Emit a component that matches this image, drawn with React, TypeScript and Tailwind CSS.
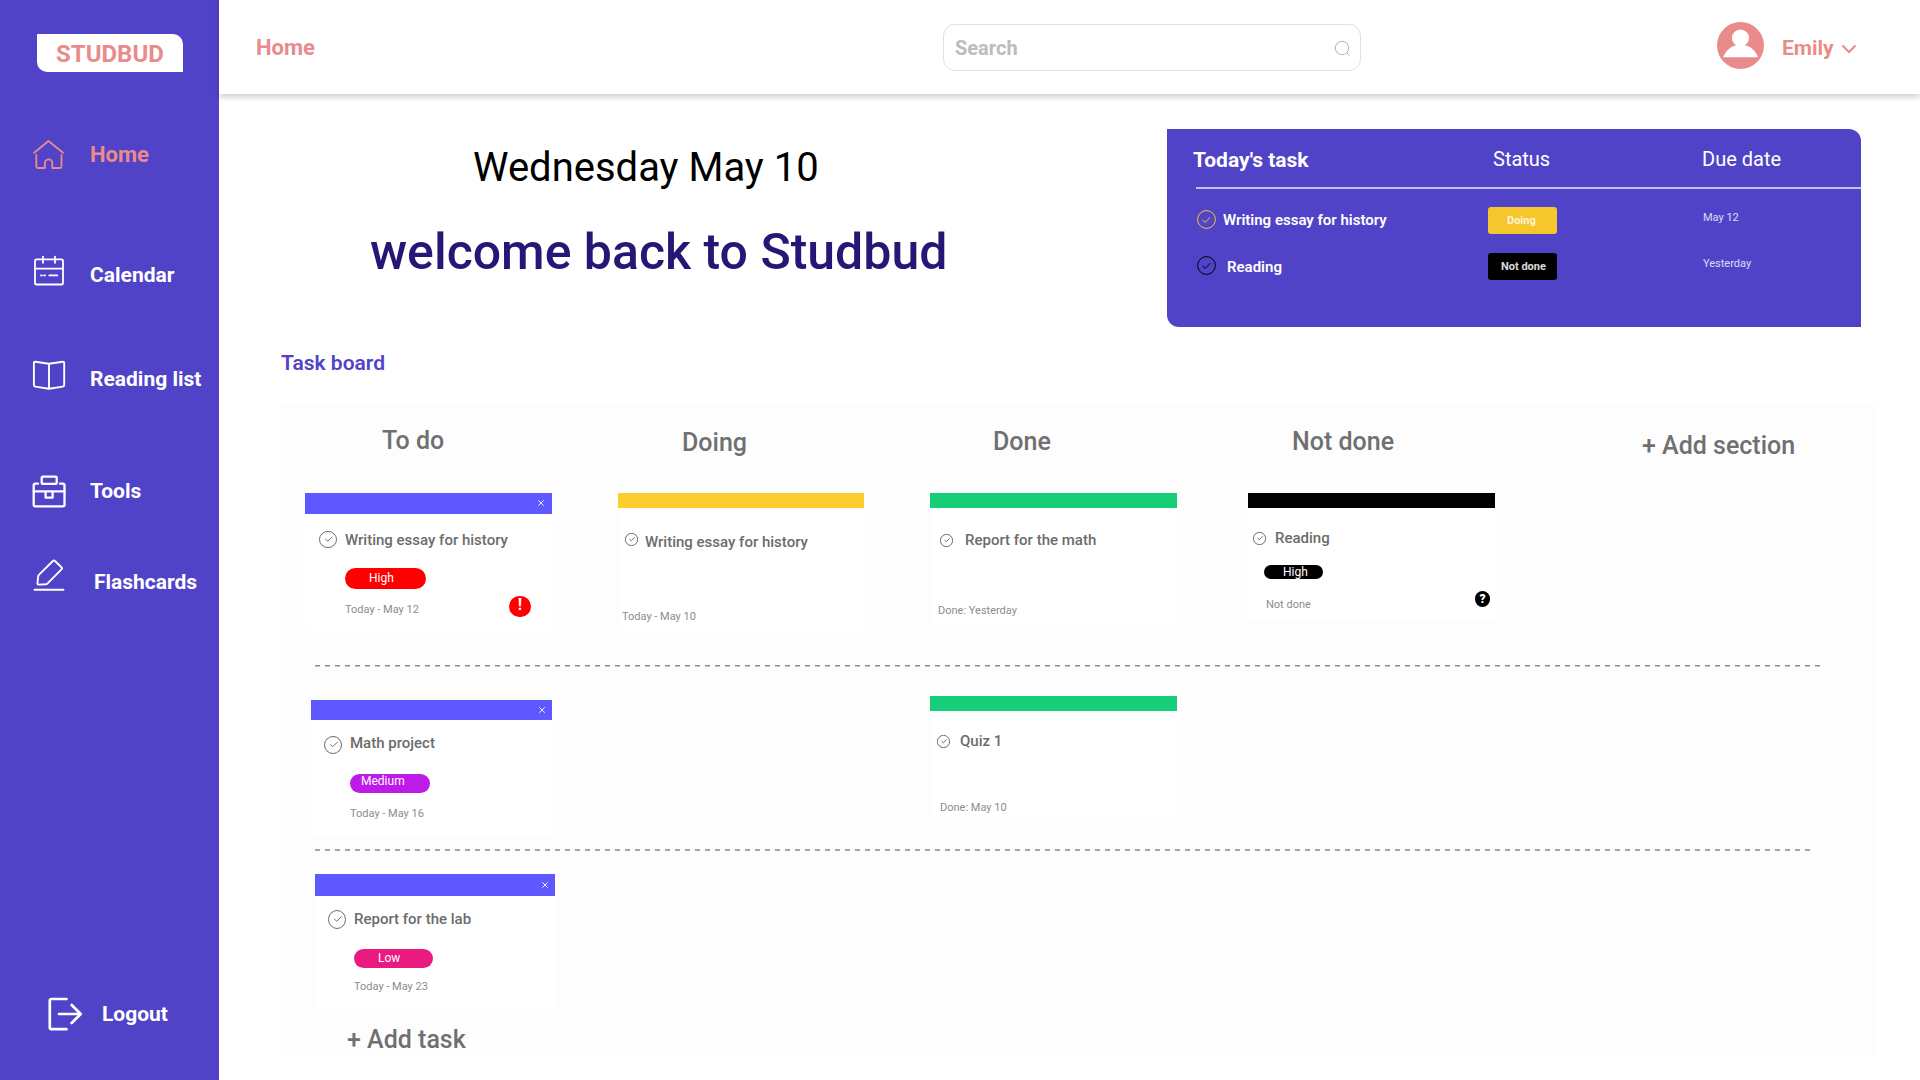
import type { ReactNode } from 'react';

function NavIcon({ children, className }: { children: ReactNode; className: string }) {
  return (
    <svg
      viewBox="0 0 36 36"
      fill="none"
      stroke="currentColor"
      strokeLinecap="round"
      strokeLinejoin="round"
      className={`h-9 w-9 shrink-0 ${className}`}
    >
      {children}
    </svg>
  );
}

function HomeIcon() {
  return (
    <NavIcon className="stroke-[1.8]">
      <path d="M2.2 14.7 16.5 3 31 14.7" />
      <path d="M4.3 17v11.5Q4.3 30 5.8 30h7.1v-4.9a3.7 3.7 0 0 1 7.4 0V30h7.7q1.5 0 1.5-1.5V17" />
    </NavIcon>
  );
}

function CalendarIcon() {
  return (
    <NavIcon className="stroke-[1.8]">
      <rect x="3" y="5.3" width="28" height="25.2" rx="1.6" />
      <path d="M3 14.7h28M11 2.6v6.2M23 2.6v6.2M9 21.4h.8M12 21.4h1M17.3 21.4h8" />
    </NavIcon>
  );
}

function BookIcon() {
  return (
    <NavIcon className="stroke-[1.9]">
      <path d="M17 4.7 3.2 2.8Q1.9 2.7 1.9 4v22q0 1.4 1.3 1.6L17 29.8l13.8-2.2q1.4-.2 1.4-1.6V4q0-1.3-1.4-1.2ZM17 4.7v25.1" />
    </NavIcon>
  );
}

function ToolsIcon() {
  return (
    <NavIcon className="stroke-[2.3]">
      <path d="M6 9.7H3.2q-1.5 0-1.5 1.5v19.6q0 1.6 1.6 1.6h27.6q1.6 0 1.6-1.6V11.2q0-1.5-1.5-1.5H28" />
      <rect x="9.7" y="2.7" width="15" height="7.2" rx="1" />
      <path d="M1.7 17.3h30.8M13.6 17.3v6.4h7v-6.4" />
    </NavIcon>
  );
}

function PencilIcon() {
  return (
    <NavIcon className="stroke-[1.9]">
      <path d="M20.9 3q1.1-1 2.1 0l6.7 6.5q.8.8 0 1.7L15.6 25.3q-.9.9-2.1 1l-6.6.3q-1.5 0-1.4-1.4l.6-6.3q.1-1.3 1-2.2Z" />
      <path d="M2.5 31.7h29" />
    </NavIcon>
  );
}

function LogoutIcon() {
  return (
    <NavIcon className="stroke-[2.7]">
      <path d="M18.5 3H3.4Q1.8 3 1.8 4.6v27q0 1.600 1.600 1.600h15.100M11 18h21.500M23.700 9l9 9-9 9" />
    </NavIcon>
  );
}

function NavItem({ icon, label, className, labelClass }: { icon: ReactNode; label: string; className: string; labelClass: string }) {
  return (
    <a className={`flex h-9 items-start font-bold leading-6 ${className}`}>
      {icon}
      <span className={labelClass}>{label}</span>
    </a>
  );
}

function Sidebar() {
  return (
    <aside className="flex h-full w-[219px] shrink-0 flex-col bg-[#5143c7] text-white">
      <div className="mt-[34px] ml-[37px] flex h-[38px] w-[146px] shrink-0 rounded-tr-[10px] rounded-bl-[10px] bg-white pt-1.5 pl-[19px] text-2xl leading-7 font-bold text-[#ea8b8b]">
        STUDBUD
      </div>
      <nav className="flex flex-col pl-8">
        <NavItem icon={<HomeIcon />} label="Home" className="mt-[66px] text-[#ea8b8b]" labelClass="mt-[5px] ml-[22px] text-[22px]" />
        <NavItem icon={<CalendarIcon />} label="Calendar" className="mt-20" labelClass="mt-[9px] ml-[22px] text-[21px]" />
        <NavItem icon={<BookIcon />} label="Reading list" className="mt-[69px]" labelClass="mt-2 ml-[22px] text-[21px]" />
        <NavItem icon={<ToolsIcon />} label="Tools" className="mt-[79px]" labelClass="mt-[5px] ml-[22px] text-[21px]" />
        <NavItem icon={<PencilIcon />} label="Flashcards" className="mt-12" labelClass="mt-3 ml-[26px] text-[21px]" />
      </nav>
      <NavItem icon={<LogoutIcon />} label="Logout" className="mt-auto mb-12 ml-12" labelClass="mt-1.5 ml-[18px] text-[21px]" />
    </aside>
  );
}

function Header() {
  return (
    <header className="flex h-[94px] shrink-0 items-start bg-white font-bold text-[#ea8b8b] shadow-[0_3px_6px_rgba(0,0,0,0.2)]">
      <h1 className="mt-9 ml-[37px] w-[687px] text-[22px] leading-6">Home</h1>
      <div className="mt-6 flex h-[47px] w-[418px] shrink-0 items-start justify-between rounded-xl border border-[#e0e0e0] pr-[9px] pl-[11px] text-xl leading-6 text-[#bcbcbc]">
        <span className="mt-[11px]">Search</span>
        <svg viewBox="0 0 18 18" fill="none" stroke="#b4b4b4" className="mt-[14px] h-[18px] w-[18px] stroke-1">
          <circle cx="9" cy="9" r="6.7" />
          <path d="m13.7 13.7 2.8 2.8" />
        </svg>
      </div>
      <svg viewBox="0 0 47 47" className="mt-[22px] ml-[356px] h-[47px] w-[47px] shrink-0">
        <circle cx="23.5" cy="23.5" r="23.5" fill="#ea8b8b" />
        <circle cx="23.5" cy="16" r="8.6" fill="#fff" />
        <path d="M6 35.300C9 28.500 14 24.300 18.500 23.500h10C33.500 24.300 38.500 28.500 41 35.300Z" fill="#fff" />
      </svg>
      <span className="mt-9 ml-[18px] text-[21px] leading-6">Emily</span>
      <svg viewBox="0 0 16 10" fill="none" stroke="currentColor" className="mt-11 ml-[7px] h-2.5 w-4 stroke-2">
        <path d="M1.500 1.500 8 8l6.500-6.500" />
      </svg>
    </header>
  );
}

function PanelCheck({ className }: { className: string }) {
  return (
    <svg viewBox="0 0 19 19" fill="none" stroke="currentColor" className={`ml-[30px] h-[19px] w-[19px] shrink-0 ${className}`}>
      <circle cx="9.5" cy="9.5" r="8.9" />
      <path d="m5.500 9.800 2.700 2.700 5-5.300" />
    </svg>
  );
}

function TodayPanel() {
  return (
    <section className="mt-[35px] h-[198px] w-[694px] shrink-0 rounded-tr-xl rounded-bl-xl bg-[#5143c7] text-white">
      <div className="grid h-[58px] grid-cols-[326px_209px_1fr] items-start text-xl leading-6">
        <h2 className="mt-[19px] ml-[26px] text-[21px] font-bold">Today's task</h2>
        <span className="mt-[18px]">Status</span>
        <span className="mt-[18px]">Due date</span>
      </div>
      <div className="mb-[18px] ml-[29px] h-[2px] bg-[#c4bfec]" />
      <div className="grid h-[46px] grid-cols-[321px_214px_1fr] items-start text-[11px]">
        <div className="flex items-start text-[15px] leading-[18px] font-semibold">
          <PanelCheck className="mt-[3px] text-[#f6c72d]" />
          <span className="mt-1 ml-[7px]">Writing essay for history</span>
        </div>
        <span className="h-[27px] w-[69px] rounded-[3px] bg-[#f6c72d] pt-1.5 pl-[19px] leading-4 font-bold text-white/80">Doing</span>
        <span className="mt-1 ml-px leading-[14px] text-white/80">May 12</span>
      </div>
      <div className="grid h-[46px] grid-cols-[321px_214px_1fr] items-start text-[11px]">
        <div className="flex items-start text-[15px] leading-[18px] font-semibold">
          <PanelCheck className="mt-[3px] text-black" />
          <span className="mt-[5px] ml-[11px]">Reading</span>
        </div>
        <span className="h-[27px] w-[69px] rounded-[3px] bg-black pt-1.5 pl-[13px] leading-4 font-bold text-white/85">Not done</span>
        <span className="mt-1 ml-px leading-[14px] text-white/80">Yesterday</span>
      </div>
    </section>
  );
}

interface CardProps {
  size: string;
  bar: string;
  closable?: boolean;
  title: string;
  titleRow: string;
  check: string;
  label?: string;
  labelClass?: string;
  note: string;
  noteClass: string;
  badge?: ReactNode;
}

function Card({ size, bar, closable, title, titleRow, check, label, labelClass, note, noteClass, badge }: CardProps) {
  return (
    <article className={`relative shrink-0 bg-white ${size}`}>
      <div className={`flex items-center justify-end ${bar}`}>
        {closable && (
          <svg viewBox="0 0 6 6" stroke="#fff" className="h-[6px] w-[6px] stroke-[0.9]">
            <path d="M.3.3 5.7 5.7M5.7.3.3 5.7" />
          </svg>
        )}
      </div>
      <div className={`flex h-[18px] items-start text-[15px] leading-[18px] font-medium text-[#6c6c6c] ${titleRow}`}>
        <svg viewBox="0 0 18 18" fill="none" stroke="currentColor" preserveAspectRatio="none" className={`shrink-0 ${check}`}>
          <circle cx="9" cy="9" r="8.5" vectorEffect="non-scaling-stroke" />
          <path d="m6.3 8.5 2.5 2.2 4.6-4.6" vectorEffect="non-scaling-stroke" />
        </svg>
        <h4>{title}</h4>
      </div>
      {label && <div className={`rounded-full text-xs text-white ${labelClass}`}>{label}</div>}
      <p className={`text-[11px] leading-[14px] text-[#8c8c8c] ${noteClass}`}>{note}</p>
      {badge}
    </article>
  );
}

function Divider({ className, y }: { className: string; y: number }) {
  return (
    <svg className={`ml-[34px] h-[2px] shrink-0 ${className}`} stroke="#8a8a8a" strokeWidth="1.5" strokeDasharray="5 5">
      <line x1="0" x2="100%" y1={y} y2={y} />
    </svg>
  );
}

function Board() {
  return (
    <section className="mt-[29px] ml-[62px] flex h-[653px] w-[1596px] shrink-0 flex-col bg-[#fdfdfd]">
      <div className="grid h-[89px] shrink-0 grid-cols-[313px_312px_318px_393px_1fr] items-start pl-6 text-[25px] leading-[25px] font-medium text-[#707070]">
        <h3 className="mt-6 ml-[77px]">To do</h3>
        <h3 className="mt-[26px] ml-16">Doing</h3>
        <h3 className="mt-[25px] ml-[63px]">Done</h3>
        <h3 className="mt-[25px] ml-11">Not done</h3>
        <button className="mt-[29px] ml-px text-left">+ Add section</button>
      </div>
      <div className="grid h-[172px] shrink-0 grid-cols-[313px_312px_318px_393px_1fr] items-start pl-6">
        <Card
          size="h-[138px] w-[247px]"
          bar="h-[21px] bg-[#5f57ff] pr-2 pb-px"
          closable
          title="Writing essay for history"
          titleRow="mt-[17px] ml-[14px] gap-2"
          check="h-[17px] w-[18px]"
          label="High"
          labelClass="mt-[19px] ml-10 h-[21px] w-[81px] bg-[#ff0000] pl-6 pt-px leading-[18px]"
          note="Today - May 12"
          noteClass="mt-[14px] ml-10"
          badge={
            <span className="absolute top-[103px] left-[204px] h-[21px] w-[22px] rounded-full bg-[#ff0000] text-center text-base leading-[18px] font-bold text-white">
              !
            </span>
          }
        />
        <Card
          size="h-[138px] w-[246px]"
          bar="h-[15px] bg-[#fbce2b]"
          title="Writing essay for history"
          titleRow="mt-[25px] ml-[7px] gap-[7px]"
          check="h-[13px] w-[13px]"
          note="Today - May 10"
          noteClass="mt-[59px] ml-1"
        />
        <Card
          size="h-[132px] w-[247px]"
          bar="h-[15px] bg-[#16ce77]"
          title="Report for the math"
          titleRow="mt-[23px] ml-[10px] gap-3"
          check="mt-[3px] h-[13px] w-[13px]"
          note="Done: Yesterday"
          noteClass="mt-[55px] ml-2"
        />
        <Card
          size="h-[126px] w-[247px]"
          bar="h-[15px] bg-black"
          title="Reading"
          titleRow="mt-[21px] ml-[5px] gap-[9px]"
          check="mt-[3px] h-[13px] w-[13px]"
          label="High"
          labelClass="mt-[18px] ml-4 h-[14px] w-[59px] bg-black pl-[19px] leading-[14px]"
          note="Not done"
          noteClass="mt-[19px] ml-[18px]"
          badge={
            <span className="absolute top-[98px] left-[227px] h-4 w-[15px] rounded-full bg-black text-center text-xs leading-4 font-black text-white">
              ?
            </span>
          }
        />
      </div>
      <Divider className="w-[1505px]" y={0.75} />
      <div className="grid h-[182px] shrink-0 grid-cols-[619px_1fr] items-start pl-[30px]">
        <Card
          size="mt-[33px] h-[136px] w-[241px]"
          bar="h-5 bg-[#5f57ff] pr-[7px]"
          closable
          title="Math project"
          titleRow="mt-[14px] ml-[13px] gap-2"
          check="mt-[2px] h-[18px] w-[18px]"
          label="Medium"
          labelClass="mt-[22px] ml-[39px] h-[19px] w-[80px] bg-[#be1ae8] pl-[11px] leading-[14px]"
          note="Today - May 16"
          noteClass="mt-[14px] ml-[39px]"
        />
        <Card
          size="mt-[29px] h-[126px] w-[247px]"
          bar="h-[15px] bg-[#16ce77]"
          title="Quiz 1"
          titleRow="mt-[21px] ml-[7px] gap-[10px]"
          check="mt-[3px] h-[13px] w-[13px]"
          note="Done: May 10"
          noteClass="mt-[51px] ml-[10px]"
        />
      </div>
      <Divider className="w-[1496px]" y={1} />
      <Card
        size="mt-[23px] ml-[34px] h-[136px] w-[240px]"
        bar="h-[22px] bg-[#5f57ff] pr-[7px]"
        closable
        title="Report for the lab"
        titleRow="mt-[14px] ml-[13px] gap-2"
        check="h-[19px] w-[18px]"
        label="Low"
        labelClass="mt-[21px] ml-[39px] h-[19px] w-[79px] bg-[#ea1a80] pl-6 leading-[18px]"
        note="Today - May 23"
        noteClass="mt-3 ml-[39px]"
      />
      <button className="mt-[17px] ml-[66px] text-left text-[25px] leading-[25px] font-medium text-[#707070]">+ Add task</button>
    </section>
  );
}

export default function App() {
  return (
    <div className="flex h-[1080px] w-[1920px] overflow-hidden bg-white font-[Roboto,sans-serif] whitespace-nowrap">
      <Sidebar />
      <div className="flex min-w-0 flex-1 flex-col">
        <Header />
        <div className="flex h-[257px] shrink-0">
          <div className="flex w-[948px] shrink-0 flex-col">
            <p className="mt-[50px] ml-[254px] text-[40px] leading-[48px] text-black">Wednesday May 10</p>
            <h2 className="mt-[30px] ml-[151px] text-[50px] leading-[60px] font-medium text-[#261675]">welcome back to Studbud</h2>
          </div>
          <TodayPanel />
        </div>
        <h2 className="ml-[62px] h-6 shrink-0 text-[21px] leading-6 font-semibold text-[#5143c7]">Task board</h2>
        <Board />
      </div>
    </div>
  );
}
